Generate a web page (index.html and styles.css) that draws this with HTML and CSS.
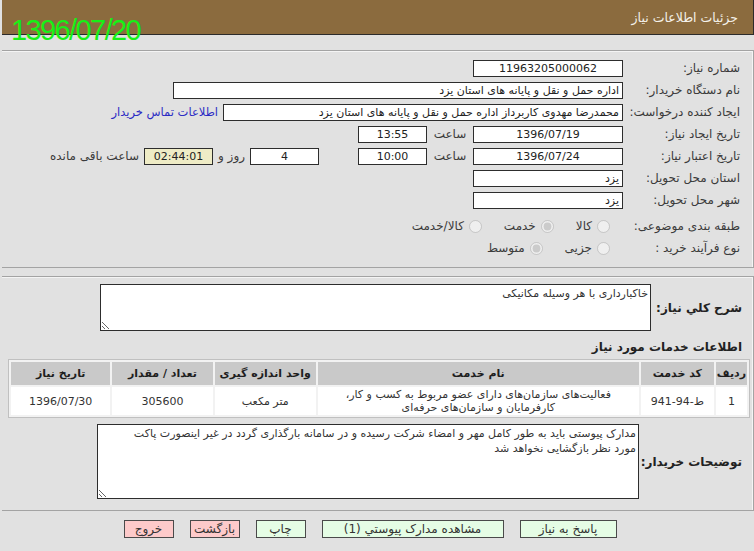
FILE: index.html
```html
<!DOCTYPE html>
<html lang="fa" dir="rtl">
<head>
<meta charset="utf-8">
<title>جزئیات اطلاعات نیاز</title>
<link rel="stylesheet" href="styles.css">
</head>
<body>
<div class="header">
  <span class="title">جزئیات اطلاعات نیاز</span>
  <span class="stamp">1396/07/20</span>
</div>

<div class="panel panel-info">
  <div class="row">
    <span class="lbl">شماره نیاز:</span>
    <span class="inp w148 center">11963205000062</span>
  </div>
  <div class="row">
    <span class="lbl">نام دستگاه خریدار:</span>
    <span class="inp w448">اداره حمل و نقل و پایانه های استان یزد</span>
  </div>
  <div class="row">
    <span class="lbl">ایجاد کننده درخواست:</span>
    <span class="inp w398">محمدرضا مهدوی کاربرداز اداره حمل و نقل و پایانه های استان یزد</span>
    <a class="link" href="#">اطلاعات تماس خریدار</a>
  </div>
  <div class="row">
    <span class="lbl">تاریخ ایجاد نیاز:</span>
    <span class="inp w148 center">1396/07/19</span>
    <span class="hour">ساعت</span>
    <span class="inp w67 center">13:55</span>
  </div>
  <div class="row">
    <span class="lbl">تاریخ اعتبار نیاز:</span>
    <span class="inp w148 center">1396/07/24</span>
    <span class="hour">ساعت</span>
    <span class="inp w67 center">10:00</span>
    <span class="inp w67 center days">4</span>
    <span class="txt">روز و</span>
    <span class="inp w67 center countdown">02:44:01</span>
    <span class="txt">ساعت باقی مانده</span>
  </div>
  <div class="row">
    <span class="lbl">استان محل تحویل:</span>
    <span class="inp w148">یزد</span>
  </div>
  <div class="row">
    <span class="lbl">شهر محل تحویل:</span>
    <span class="inp w148">یزد</span>
  </div>
  <div class="row radio-row first-radio">
    <span class="lbl">طبقه بندی موضوعی:</span>
    <label class="opt"><input type="radio" disabled name="c1"><span>کالا</span></label>
    <label class="opt"><input type="radio" disabled checked name="c1"><span>خدمت</span></label>
    <label class="opt"><input type="radio" disabled name="c1"><span>کالا/خدمت</span></label>
  </div>
  <div class="row radio-row">
    <span class="lbl">نوع فرآیند خرید :</span>
    <label class="opt"><input type="radio" disabled name="c2"><span>جزیی</span></label>
    <label class="opt"><input type="radio" disabled checked name="c2"><span>متوسط</span></label>
  </div>
</div>

<div class="panel panel-detail">
  <div class="area-row">
    <span class="blbl w88">شرح كلي نياز:</span>
    <textarea class="area area1" readonly>خاکبارداری با هر وسیله مکانیکی</textarea>
  </div>
  <div class="heading">اطلاعات خدمات مورد نیاز</div>
  <table class="grid">
    <thead>
      <tr>
        <th class="c1">ردیف</th>
        <th class="c2">کد خدمت</th>
        <th class="c3">نام خدمت</th>
        <th class="c4">واحد اندازه گیری</th>
        <th class="c5">تعداد / مقدار</th>
        <th class="c6">تاریخ نیاز</th>
      </tr>
    </thead>
    <tbody>
      <tr>
        <td>1</td>
        <td>ط-94-941</td>
        <td>فعالیت‌های سازمان‌های دارای عضو مربوط به کسب و کار، کارفرمایان و سازمان‌های حرفه‌ای</td>
        <td>متر مکعب</td>
        <td>305600</td>
        <td>1396/07/30</td>
      </tr>
    </tbody>
  </table>
  <div class="area-row notes">
    <span class="blbl w100">توضیحات خریدار:</span>
    <textarea class="area area2" readonly>مدارک پیوستی باید به طور کامل مهر و امضاء شرکت رسیده و در سامانه بارگذاری گردد در غیر اینصورت پاکت مورد نظر بازگشایی نخواهد شد</textarea>
  </div>
</div>

<div class="buttons">
  <button class="btn green w97">پاسخ به نیاز</button>
  <button class="btn green w182">مشاهده مدارک پیوستي (1)</button>
  <button class="btn green w50">چاپ</button>
  <button class="btn red w50">بازگشت</button>
  <button class="btn red w50">خروج</button>
</div>
</body>
</html>
```
FILE: styles.css
```css
* { box-sizing: border-box; }
html, body { margin: 0; padding: 0; }
body {
  background: #e1e1e1;
  font-family: "DejaVu Sans", "Noto Sans", sans-serif;
  font-size: 11px;
  color: #333;
  direction: rtl;
  width: 754px;
  height: 551px;
  overflow: hidden;
}
.header {
  position: relative;
  height: 35px;
  width: 752px;
  background: #8b6b3e;
  border-bottom: 1px solid #2b2b2b;
  border-right: 1px solid #2b2b2b;
  display: flex;
  align-items: center;
  padding-right: 15px;
}
.title {
  color: #f4f1ea;
  font-size: 12.5px;
}
.stamp {
  position: absolute;
  left: 9px;
  top: 14px;
  color: #16f016;
  font-family: "Liberation Sans", Arial, sans-serif;
  font-size: 29px;
  letter-spacing: -1.6px;
  line-height: 32px;
  direction: ltr;
}
.panel {
  width: 752px;
  border-top: 1px solid #a3a3a3;
  border-right: 1px solid #a3a3a3;
  border-bottom: 1px solid #a3a3a3;
  box-shadow: inset -1px 1px 0 #f4f4f4;
}
.panel-info {
  margin-top: 15px;
  padding: 6px 13px 8px 0;
}
.row {
  display: flex;
  align-items: center;
  height: 22px;
}
.first-radio { margin-top: 4px; }
.lbl {
  width: 117px;
  color: #3b3b3b;
  font-size: 12px;
  white-space: nowrap;
}
.inp {
  display: block;
  height: 17px;
  line-height: 15px;
  border: 1px solid #2d2d2d;
  background: #fff;
  color: #222;
  padding: 0 3px;
  white-space: nowrap;
  overflow: hidden;
}
.center { text-align: center; }
.w148 { width: 150px; }
.w448 { width: 450px; }
.w398 { width: 400px; }
.w67 { width: 69px; }
.link {
  color: #2b2bc4;
  font-size: 11.5px;
  text-decoration: none;
  margin-right: 5px;
}
.hour {
  width: 46px;
  text-align: center;
  font-size: 12px;
  color: #3b3b3b;
}
.days { margin-right: 39px; }
.txt { margin: 0 5px; font-size: 12px; color: #3b3b3b; white-space: nowrap; }
.countdown { background: #efecc6; }
.opt {
  display: flex;
  align-items: center;
  color: #3b3b3b;
  font-size: 12px;
  margin-left: 22px;
}
.opt:first-of-type { margin-right: 13px; }
.opt input {
  margin: 0 0 0 5px;
  width: 13px;
  height: 13px;
}
.panel-detail {
  margin-top: 8px;
  padding: 7px 11px 11px 0;
  height: 235px;
}
.area-row {
  display: flex;
  align-items: center;
}
.blbl {
  font-weight: bold;
  font-size: 12px;
  color: #222;
  white-space: nowrap;
}
.w88 { width: 91px; }
.w100 { width: 103px; }
.area {
  resize: both;
  border: 1px solid #2d2d2d;
  background: #fff;
  font-family: "DejaVu Sans", sans-serif;
  font-size: 11px;
  color: #333;
  padding: 1px 2px;
  direction: rtl;
  line-height: 15px;
}
.area1 { width: 551px; height: 47px; }
.area2 { width: 542px; height: 75px; padding-left: 30px; }
.heading {
  font-weight: bold;
  font-size: 12px;
  color: #222;
  margin-top: 8px;
  height: 16px;
  line-height: 16px;
}
.grid {
  margin-top: 4px;
  margin-right: -8px;
  width: 742px;
  border: 1px solid #c0c0c0;
  background: #f2f2f2;
  border-collapse: separate;
  border-spacing: 2px;
  font-size: 11px;
}
.grid th {
  background: #c9c9c9;
  color: #1e1e1e;
  font-weight: bold;
  height: 23px;
  padding: 0;
}
.grid td {
  background: #fff;
  color: #333;
  text-align: center;
  height: 28px;
  padding: 0 4px;
  line-height: 13px;
}
.c1 { width: 31px; }
.c2 { width: 73px; }
.c3 { width: 320px; }
.c4 { width: 101px; }
.c5 { width: 100px; }
.c6 { width: 99px; }
.notes { margin-top: 6px; }
.buttons {
  display: flex;
  justify-content: center;
  gap: 16px;
  margin-top: 9px;
  padding-right: 14px;
}
.btn {
  height: 18px;
  border: 1px solid #4a4a4a;
  font-family: "DejaVu Sans", sans-serif;
  font-size: 12px;
  color: #333;
  padding: 0;
  line-height: 15px;
}
.green { background: #e5fde5; }
.red { background: #fdcaca; }
.w97 { width: 97px; }
.w182 { width: 182px; }
.w50 { width: 50px; }
```
